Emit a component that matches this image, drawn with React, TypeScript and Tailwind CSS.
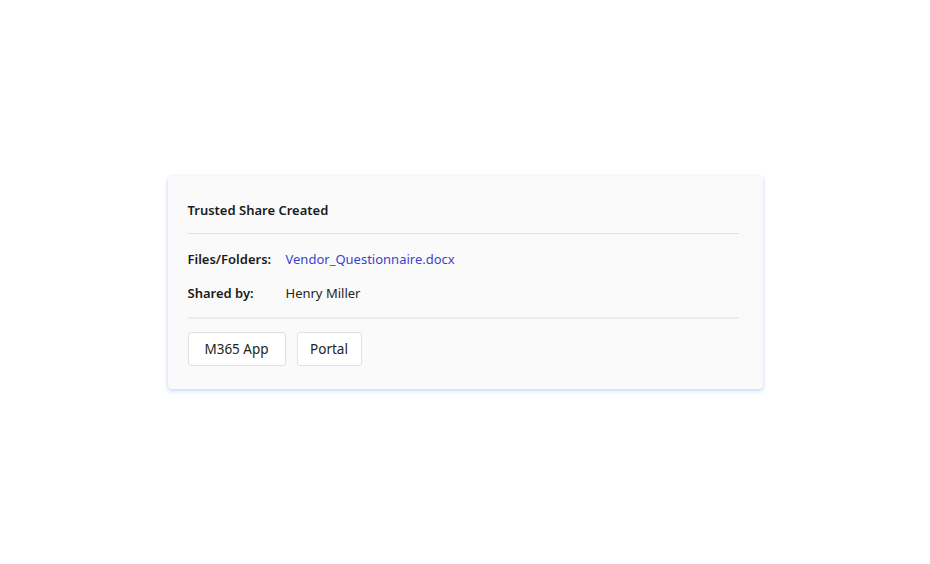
import React from 'react';

const rows = [
  { label: 'Files/Folders:', value: 'Vendor_Questionnaire.docx', link: true },
  { label: 'Shared by:', value: 'Henry Miller', link: false },
];

export default function App() {
  return (
    <div
      className="min-h-screen flex items-center justify-center bg-white"
      style={{ fontFamily: '"Noto Sans", "Open Sans", sans-serif' }}
    >
      <div className="w-[595px] rounded-[4px] bg-[#fafafa] pl-5 pr-6 pt-[20px] pb-[23px] shadow-[0_2px_4px_rgba(60,140,255,0.3),0_0_2px_rgba(60,140,255,0.15)]">
        <h2 className="text-[13px] font-semibold leading-[28px] text-[#1b1b1b]">Trusted Share Created</h2>
        <div className="mt-[9px] h-px bg-[#e1e1e1]" />
        <div className="mt-[14px] flex flex-col gap-[12px]">
          {rows.map((r) => (
            <div key={r.label} className="flex items-center text-[13px] leading-[22px]">
              <span className="w-[98px] font-semibold text-[#1b1b1b]">{r.label}</span>
              <span className={r.link ? 'text-[#3c3fd0]' : 'text-[#242424]'}>{r.value}</span>
            </div>
          ))}
        </div>
        <div className="mt-[13px] h-[2px] bg-[#ececec]" />
        <div className="mt-[13px] flex gap-[11px]">
          <button className="h-[34px] w-[98px] pt-[2px] rounded-[3px] border border-[#e1e1e1] bg-white text-[13.5px] text-[#242424]">
            M365 App
          </button>
          <button className="h-[34px] w-[65px] pt-[2px] rounded-[3px] border border-[#e1e1e1] bg-white text-[13.5px] text-[#242424]">
            Portal
          </button>
        </div>
      </div>
    </div>
  );
}
